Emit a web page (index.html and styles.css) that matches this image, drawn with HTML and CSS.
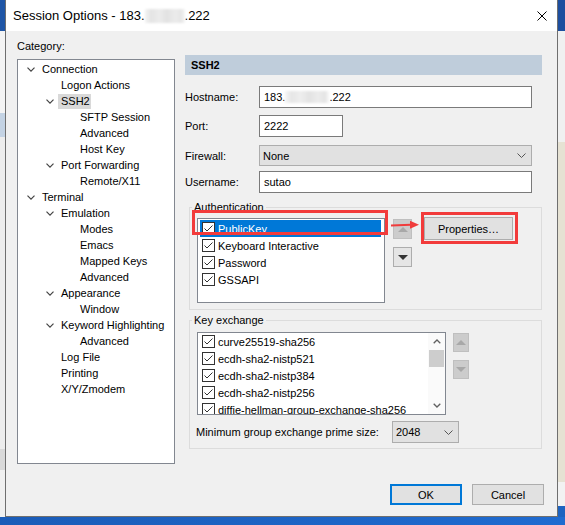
FILE: index.html
```html
<!DOCTYPE html>
<html>
<head>
<meta charset="utf-8">
<title>Session Options</title>
<link rel="stylesheet" href="styles.css">
</head>
<body>
<div class="desktop">
  <div class="strip strip-left"></div>
  <div class="dialog">
    <div class="titlebar">
      <span class="title">Session Options - 183.<span class="blur blur-title"></span>.222</span>
      <svg class="close" width="10" height="10" viewBox="0 0 10 10"><path d="M0.5 0.5 L9.5 9.5 M9.5 0.5 L0.5 9.5" stroke="#000" stroke-width="1" fill="none"/></svg>
    </div>
    <div class="body">
      <div class="left">
        <div class="cat-label">Category:</div>
        <div class="tree">
          <div class="row l0"><span class="chev"><svg width="8" height="5" viewBox="0 0 8 5"><path d="M0.5 0.6 L4 4.1 L7.5 0.6" fill="none" stroke="#444" stroke-width="1.2"/></svg></span><span>Connection</span></div>
          <div class="row l1"><span class="chev"></span><span>Logon Actions</span></div>
          <div class="row l1"><span class="chev"><svg width="8" height="5" viewBox="0 0 8 5"><path d="M0.5 0.6 L4 4.1 L7.5 0.6" fill="none" stroke="#444" stroke-width="1.2"/></svg></span><span class="sel">SSH2</span></div>
          <div class="row l2"><span class="chev"></span><span>SFTP Session</span></div>
          <div class="row l2"><span class="chev"></span><span>Advanced</span></div>
          <div class="row l2"><span class="chev"></span><span>Host Key</span></div>
          <div class="row l1"><span class="chev"><svg width="8" height="5" viewBox="0 0 8 5"><path d="M0.5 0.6 L4 4.1 L7.5 0.6" fill="none" stroke="#444" stroke-width="1.2"/></svg></span><span>Port Forwarding</span></div>
          <div class="row l2"><span class="chev"></span><span>Remote/X11</span></div>
          <div class="row l0"><span class="chev"><svg width="8" height="5" viewBox="0 0 8 5"><path d="M0.5 0.6 L4 4.1 L7.5 0.6" fill="none" stroke="#444" stroke-width="1.2"/></svg></span><span>Terminal</span></div>
          <div class="row l1"><span class="chev"><svg width="8" height="5" viewBox="0 0 8 5"><path d="M0.5 0.6 L4 4.1 L7.5 0.6" fill="none" stroke="#444" stroke-width="1.2"/></svg></span><span>Emulation</span></div>
          <div class="row l2"><span class="chev"></span><span>Modes</span></div>
          <div class="row l2"><span class="chev"></span><span>Emacs</span></div>
          <div class="row l2"><span class="chev"></span><span>Mapped Keys</span></div>
          <div class="row l2"><span class="chev"></span><span>Advanced</span></div>
          <div class="row l1"><span class="chev"><svg width="8" height="5" viewBox="0 0 8 5"><path d="M0.5 0.6 L4 4.1 L7.5 0.6" fill="none" stroke="#444" stroke-width="1.2"/></svg></span><span>Appearance</span></div>
          <div class="row l2"><span class="chev"></span><span>Window</span></div>
          <div class="row l1"><span class="chev"><svg width="8" height="5" viewBox="0 0 8 5"><path d="M0.5 0.6 L4 4.1 L7.5 0.6" fill="none" stroke="#444" stroke-width="1.2"/></svg></span><span>Keyword Highlighting</span></div>
          <div class="row l2"><span class="chev"></span><span>Advanced</span></div>
          <div class="row l1"><span class="chev"></span><span>Log File</span></div>
          <div class="row l1"><span class="chev"></span><span>Printing</span></div>
          <div class="row l1"><span class="chev"></span><span>X/Y/Zmodem</span></div>
        </div>
      </div>

      <div class="right">
        <div class="header">SSH2</div>

        <div class="frow f-host">
          <label class="flabel">Hostname:</label>
          <div class="input w-full">183.<span class="blur blur-host"></span>.222</div>
        </div>
        <div class="frow f-port">
          <label class="flabel">Port:</label>
          <div class="input w-port">2222</div>
        </div>
        <div class="frow f-fw">
          <label class="flabel">Firewall:</label>
          <div class="select w-full"><span>None</span><svg width="9" height="5" viewBox="0 0 9 5"><path d="M0.5 0.5 L4.5 4.5 L8.5 0.5" fill="none" stroke="#555" stroke-width="1"/></svg></div>
        </div>
        <div class="frow f-user">
          <label class="flabel">Username:</label>
          <div class="input w-full">sutao</div>
        </div>

        <fieldset class="group auth">
          <legend>Authentication</legend>
          <div class="auth-body">
            <div class="list auth-list">
              <div class="item hl"><svg class="cb" width="13" height="13" viewBox="0 0 13 13"><rect x="0.5" y="0.5" width="12" height="12" fill="#fff" stroke="#333"/><path d="M2.5 6.5 L5 9 L10.5 3.5" fill="none" stroke="#333"/></svg><span>PublicKey</span></div>
              <div class="item"><svg class="cb" width="13" height="13" viewBox="0 0 13 13"><rect x="0.5" y="0.5" width="12" height="12" fill="#fff" stroke="#333"/><path d="M2.5 6.5 L5 9 L10.5 3.5" fill="none" stroke="#333"/></svg><span>Keyboard Interactive</span></div>
              <div class="item"><svg class="cb" width="13" height="13" viewBox="0 0 13 13"><rect x="0.5" y="0.5" width="12" height="12" fill="#fff" stroke="#333"/><path d="M2.5 6.5 L5 9 L10.5 3.5" fill="none" stroke="#333"/></svg><span>Password</span></div>
              <div class="item"><svg class="cb" width="13" height="13" viewBox="0 0 13 13"><rect x="0.5" y="0.5" width="12" height="12" fill="#fff" stroke="#333"/><path d="M2.5 6.5 L5 9 L10.5 3.5" fill="none" stroke="#333"/></svg><span>GSSAPI</span></div>
            </div>
            <div class="updown ud-auth">
              <div class="ubtn disabled"><svg width="10" height="5" viewBox="0 0 10 5"><path d="M0 5 L5 0 L10 5 Z" fill="#a8a8a8"/></svg></div>
              <div class="ubtn"><svg width="10" height="5" viewBox="0 0 10 5"><path d="M0 0 L5 5 L10 0 Z" fill="#333"/></svg></div>
            </div>
            <div class="btn props">Properties…</div>
          </div>
          <div class="annot rect1"></div>
          <div class="annot rect2"></div>
          <svg class="annot arrow" width="30" height="10" viewBox="0 0 30 10"><path d="M0 5.5 L20 4.8" stroke="#f03c3c" stroke-width="2" fill="none"/><path d="M19 0.8 L28 4.8 L19 8.8 Z" fill="#f03c3c"/></svg>
        </fieldset>

        <fieldset class="group kex">
          <legend>Key exchange</legend>
          <div class="kex-body">
            <div class="list kex-list">
              <div class="kex-items">
                <div class="item"><svg class="cb" width="13" height="13" viewBox="0 0 13 13"><rect x="0.5" y="0.5" width="12" height="12" fill="#fff" stroke="#333"/><path d="M2.5 6.5 L5 9 L10.5 3.5" fill="none" stroke="#333"/></svg><span>curve25519-sha256</span></div>
                <div class="item"><svg class="cb" width="13" height="13" viewBox="0 0 13 13"><rect x="0.5" y="0.5" width="12" height="12" fill="#fff" stroke="#333"/><path d="M2.5 6.5 L5 9 L10.5 3.5" fill="none" stroke="#333"/></svg><span>ecdh-sha2-nistp521</span></div>
                <div class="item"><svg class="cb" width="13" height="13" viewBox="0 0 13 13"><rect x="0.5" y="0.5" width="12" height="12" fill="#fff" stroke="#333"/><path d="M2.5 6.5 L5 9 L10.5 3.5" fill="none" stroke="#333"/></svg><span>ecdh-sha2-nistp384</span></div>
                <div class="item"><svg class="cb" width="13" height="13" viewBox="0 0 13 13"><rect x="0.5" y="0.5" width="12" height="12" fill="#fff" stroke="#333"/><path d="M2.5 6.5 L5 9 L10.5 3.5" fill="none" stroke="#333"/></svg><span>ecdh-sha2-nistp256</span></div>
                <div class="item"><svg class="cb" width="13" height="13" viewBox="0 0 13 13"><rect x="0.5" y="0.5" width="12" height="12" fill="#fff" stroke="#333"/><path d="M2.5 6.5 L5 9 L10.5 3.5" fill="none" stroke="#333"/></svg><span>diffie-hellman-group-exchange-sha256</span></div>
              </div>
              <div class="scrollbar">
                <div class="sb-btn"><svg width="8" height="5" viewBox="0 0 8 5"><path d="M0.7 4.3 L4 1 L7.3 4.3" fill="none" stroke="#606060" stroke-width="1.3"/></svg></div>
                <div class="sb-thumb"></div>
                <div class="sb-track"></div>
                <div class="sb-btn"><svg width="8" height="5" viewBox="0 0 8 5"><path d="M0.7 0.7 L4 4 L7.3 0.7" fill="none" stroke="#606060" stroke-width="1.3"/></svg></div>
              </div>
            </div>
            <div class="updown ud-kex">
              <div class="ubtn disabled"><svg width="10" height="5" viewBox="0 0 10 5"><path d="M0 5 L5 0 L10 5 Z" fill="#a8a8a8"/></svg></div>
              <div class="ubtn disabled"><svg width="10" height="5" viewBox="0 0 10 5"><path d="M0 0 L5 5 L10 0 Z" fill="#a8a8a8"/></svg></div>
            </div>
          </div>
          <div class="prime-row">
            <span class="prime-label">Minimum group exchange prime size:</span>
            <div class="select w-prime"><span>2048</span><svg width="9" height="5" viewBox="0 0 9 5"><path d="M0.5 0.5 L4.5 4.5 L8.5 0.5" fill="none" stroke="#555" stroke-width="1"/></svg></div>
          </div>
        </fieldset>
      </div>
    </div>

    <div class="buttons">
      <div class="btn dlg default">OK</div>
      <div class="btn dlg">Cancel</div>
    </div>
  </div>
  <div class="strip strip-right"></div>
</div>
<div class="taskbar"></div>
</body>
</html>
```

FILE: styles.css
```css
* { box-sizing: border-box; }

html, body {
  margin: 0;
  padding: 0;
}

body {
  width: 565px;
  height: 525px;
  overflow: hidden;
  background: #1b5fbd;
  font-family: "Liberation Sans", Arial, sans-serif;
  font-size: 11px;
  color: #000;
}

.desktop {
  display: flex;
  height: 517px;
}

.strip-left {
  width: 5px;
  background: linear-gradient(to bottom,
    #1f56a6 0, #1f56a6 31px,
    #f4f4f4 31px, #f4f4f4 113px,
    #c4d3e4 113px, #c4d3e4 137px,
    #ededed 137px, #ededed 449px,
    #d9d9d9 449px, #d9d9d9 470px,
    #f0f0f0 470px);
}

.strip-right {
  width: 7px;
  background: linear-gradient(to bottom,
    #1d4f9f 0, #1d4f9f 31px,
    #f0f0f0 31px, #f0f0f0 142px,
    #e6e2d3 142px, #e6e2d3 482px,
    #f2f2f2 482px, #f2f2f2 506px,
    #1d63c0 506px);
}

.dialog {
  width: 553px;
  height: 517px;
  border: 1px solid #6f6f6f;
  border-top: none;
  background: #f0f0f0;
  display: flex;
  flex-direction: column;
}

.titlebar {
  height: 31px;
  flex: none;
  background: #fff;
  display: flex;
  align-items: center;
  justify-content: space-between;
  padding: 0 10px 0 7px;
}

.title {
  font-size: 13px;
  color: #000;
  white-space: nowrap;
}

.blur {
  display: inline-block;
  vertical-align: top;
  filter: blur(1px);
}

.blur-title {
  width: 40px;
  height: 14px;
  margin-top: 1px;
  background: linear-gradient(90deg, #f4f4f4 0, #e4e4e4 15%, #ececec 35%, #e2e2e2 55%, #ebebeb 75%, #e6e6e6 90%, #f6f6f6 100%);
}

.blur-host {
  width: 44px;
  height: 12px;
  margin-top: 4px;
  background: linear-gradient(90deg, #f6f6f6 0, #e6e6e6 15%, #eeeeee 35%, #e3e3e3 55%, #ececec 75%, #e4e4e4 90%, #f7f7f7 100%);
}

.body {
  display: flex;
  gap: 10px;
  padding: 0 15px 0 11px;
}

.left {
  width: 158px;
  padding-top: 8px;
}

.cat-label {
  line-height: 14px;
  margin-bottom: 6px;
}

.tree {
  height: 405px;
  border: 1px solid #828790;
  background: #fff;
  padding-top: 1px;
}

.row {
  height: 16px;
  line-height: 16px;
  display: flex;
  align-items: center;
  white-space: nowrap;
}

.row.l0 { padding-left: 9px; }
.row.l1 { padding-left: 28px; }
.row.l2 { padding-left: 47px; }

.chev {
  width: 15px;
  flex: none;
  display: flex;
  align-items: center;
}

.chev svg { display: block; }

.sel {
  background: #d9d9d9;
  margin-left: -3px;
  padding: 0 1px 0 3px;
  line-height: 15px;
}

.right {
  width: 357px;
  padding-top: 24px;
}

.header {
  height: 20px;
  line-height: 20px;
  background: #bfcddb;
  font-weight: bold;
  padding-left: 6px;
}

.frow {
  display: flex;
  align-items: center;
}

.flabel { width: 74px; flex: none; }

.f-host { margin-top: 11px; }
.f-port { margin-top: 7px; }
.f-fw { margin-top: 8px; }
.f-user { margin-top: 5px; }

.input {
  height: 22px;
  line-height: 20px;
  border: 1px solid #7a7a7a;
  background: #fff;
  padding-left: 4px;
  white-space: nowrap;
}

.w-full { width: 273px; }
.w-port { width: 84px; }

.select {
  height: 21px;
  border: 1px solid #adadad;
  background: #e1e1e1;
  display: flex;
  align-items: center;
  justify-content: space-between;
  padding: 0 5px 0 3px;
}

.select svg { display: block; }

.group {
  border: 1px solid #dcdcdc;
  margin: 0;
  min-inline-size: 0;
  position: relative;
}

.group legend {
  padding: 0 2px;
  line-height: 14px;
}

.auth {
  margin: 7px 0 0 4px;
  padding: 0 0 6px 2px;
}

.auth-body {
  display: flex;
  align-items: flex-start;
  margin: 4px 0 0 5px;
}

.list {
  border: 1px solid #828790;
  background: #fff;
  overflow: hidden;
}

.auth-list {
  width: 188px;
  height: 85px;
  padding: 1px 3px 0 2px;
}

.item {
  height: 17px;
  display: flex;
  align-items: center;
  white-space: nowrap;
}

.item .cb {
  display: block;
  flex: none;
  margin: 0 3px 0 2px;
}

.item.hl {
  background: #0078d7;
  color: #fff;
}

.updown {
  display: flex;
  flex-direction: column;
}

.ubtn {
  border: 1px solid #adadad;
  background: #e5e5e5;
  display: flex;
  align-items: center;
  justify-content: center;
}

.ubtn.disabled {
  background: #cccccc;
  border-color: #bfbfbf;
}

.ubtn svg { display: block; }

.ud-auth {
  margin: 1px 0 0 8px;
  gap: 8px;
}

.ud-auth .ubtn {
  width: 19px;
  height: 20px;
}

.btn {
  background: #e1e1e1;
  border: 1px solid #adadad;
  display: flex;
  align-items: center;
  justify-content: center;
}

.props {
  width: 89px;
  height: 23px;
  margin: -1px 0 0 12px;
}

.annot {
  position: absolute;
  pointer-events: none;
}

.rect1 {
  left: 2px;
  top: -4px;
  width: 196px;
  height: 25px;
  border: 3px solid #f23b3b;
}

.rect2 {
  left: 231px;
  top: -2px;
  width: 97px;
  height: 32px;
  border: 3px solid #f23b3b;
}

.arrow {
  left: 201px;
  top: 6px;
}

.kex {
  margin: 3px 0 0 4px;
  padding: 0 0 5px 2px;
}

.kex-body {
  display: flex;
  align-items: flex-start;
  margin: 5px 0 0 5px;
}

.kex-list {
  width: 249px;
  height: 83px;
  display: flex;
}

.kex-items {
  flex: 1;
  padding: 0 0 0 2px;
  overflow: hidden;
}

.scrollbar {
  width: 17px;
  flex: none;
  display: flex;
  flex-direction: column;
  background: #fafafa;
}

.sb-btn {
  height: 17px;
  display: flex;
  align-items: center;
  justify-content: center;
}

.sb-btn svg { display: block; }

.sb-thumb {
  height: 17px;
  margin: 0 1px;
  background: #cdcdcd;
}

.sb-track { flex: 1; }

.ud-kex {
  margin: 1px 0 0 7px;
  gap: 8px;
}

.ud-kex .ubtn {
  width: 16px;
  height: 19px;
}

.prime-row {
  display: flex;
  align-items: center;
  margin: 6px 0 0 4px;
}

.prime-label { width: 196px; flex: none; }

.w-prime {
  width: 67px;
  height: 22px;
}

.buttons {
  display: flex;
  justify-content: flex-end;
  gap: 10px;
  padding-right: 13px;
  margin-top: 20px;
}

.btn.dlg {
  width: 72px;
  height: 21px;
}

.btn.default {
  border: 2px solid #0078d7;
}

.taskbar {
  height: 8px;
  background: linear-gradient(to right, #1a5cb8, #1f6bd0);
}
```
